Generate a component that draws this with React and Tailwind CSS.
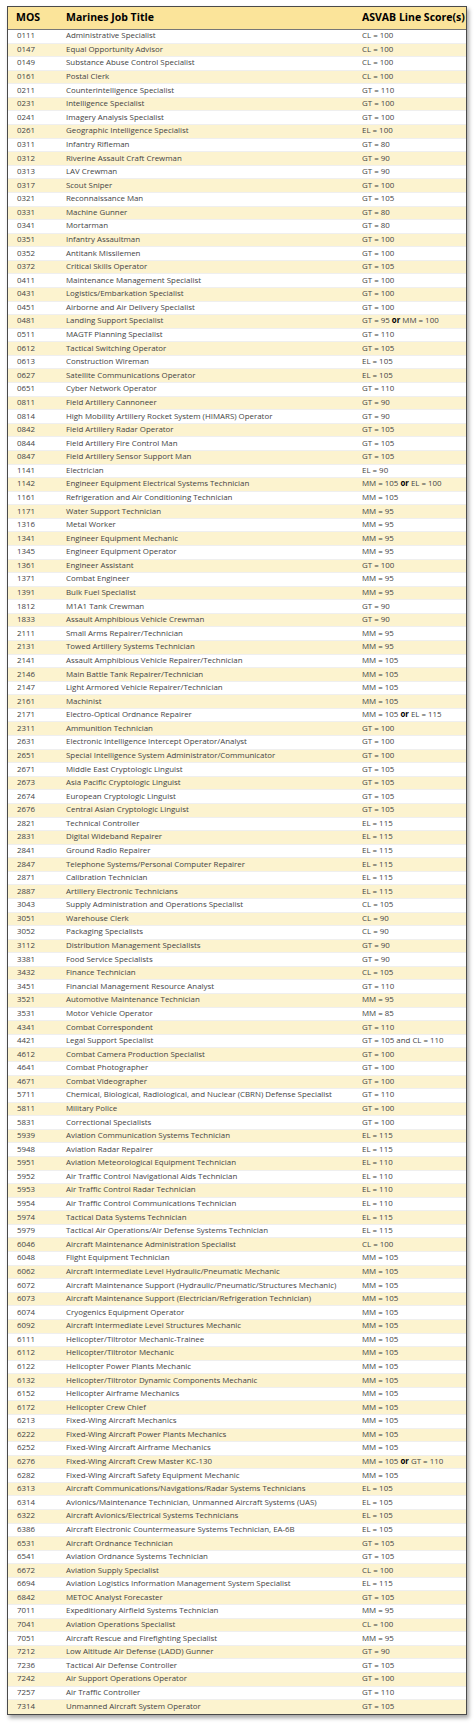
const rows = `0111|Administrative Specialist|CL = 100
0147|Equal Opportunity Advisor|CL = 100
0149|Substance Abuse Control Specialist|CL = 100
0161|Postal Clerk|CL = 100
0211|Counterintelligence Specialist|GT = 110
0231|Intelligence Specialist|GT = 100
0241|Imagery Analysis Specialist|GT = 100
0261|Geographic Intelligence Specialist|EL = 100
0311|Infantry Rifleman|GT = 80
0312|Riverine Assault Craft Crewman|GT = 90
0313|LAV Crewman|GT = 90
0317|Scout Sniper|GT = 100
0321|Reconnaissance Man|GT = 105
0331|Machine Gunner|GT = 80
0341|Mortarman|GT = 80
0351|Infantry Assaultman|GT = 100
0352|Antitank Missilemen|GT = 100
0372|Critical Skills Operator|GT = 105
0411|Maintenance Management Specialist|GT = 100
0431|Logistics/Embarkation Specialist|GT = 100
0451|Airborne and Air Delivery Specialist|GT = 100
0481|Landing Support Specialist|GT = 95 or MM = 100
0511|MAGTF Planning Specialist|GT = 110
0612|Tactical Switching Operator|GT = 105
0613|Construction Wireman|EL = 105
0627|Satellite Communications Operator|EL = 105
0651|Cyber Network Operator|GT = 110
0811|Field Artillery Cannoneer|GT = 90
0814|High Mobility Artillery Rocket System (HIMARS) Operator|GT = 90
0842|Field Artillery Radar Operator|GT = 105
0844|Field Artillery Fire Control Man|GT = 105
0847|Field Artillery Sensor Support Man|GT = 105
1141|Electrician|EL = 90
1142|Engineer Equipment Electrical Systems Technician|MM = 105 or EL = 100
1161|Refrigeration and Air Conditioning Technician|MM = 105
1171|Water Support Technician|MM = 95
1316|Metal Worker|MM = 95
1341|Engineer Equipment Mechanic|MM = 95
1345|Engineer Equipment Operator|MM = 95
1361|Engineer Assistant|GT = 100
1371|Combat Engineer|MM = 95
1391|Bulk Fuel Specialist|MM = 95
1812|M1A1 Tank Crewman|GT = 90
1833|Assault Amphibious Vehicle Crewman|GT = 90
2111|Small Arms Repairer/Technician|MM = 95
2131|Towed Artillery Systems Technician|MM = 95
2141|Assault Amphibious Vehicle Repairer/Technician|MM = 105
2146|Main Battle Tank Repairer/Technician|MM = 105
2147|Light Armored Vehicle Repairer/Technician|MM = 105
2161|Machinist|MM = 105
2171|Electro-Optical Ordnance Repairer|MM = 105 or EL = 115
2311|Ammunition Technician|GT = 100
2631|Electronic Intelligence Intercept Operator/Analyst|GT = 100
2651|Special Intelligence System Administrator/Communicator|GT = 100
2671|Middle East Cryptologic Linguist|GT = 105
2673|Asia Pacific Cryptologic Linguist|GT = 105
2674|European Cryptologic Linguist|GT = 105
2676|Central Asian Cryptologic Linguist|GT = 105
2821|Technical Controller|EL = 115
2831|Digital Wideband Repairer|EL = 115
2841|Ground Radio Repairer|EL = 115
2847|Telephone Systems/Personal Computer Repairer|EL = 115
2871|Calibration Technician|EL = 115
2887|Artillery Electronic Technicians|EL = 115
3043|Supply Administration and Operations Specialist|CL = 105
3051|Warehouse Clerk|CL = 90
3052|Packaging Specialists|CL = 90
3112|Distribution Management Specialists|GT = 90
3381|Food Service Specialists|GT = 90
3432|Finance Technician|CL = 105
3451|Financial Management Resource Analyst|GT = 110
3521|Automotive Maintenance Technician|MM = 95
3531|Motor Vehicle Operator|MM = 85
4341|Combat Correspondent|GT = 110
4421|Legal Support Specialist|GT = 105 and CL = 110
4612|Combat Camera Production Specialist|GT = 100
4641|Combat Photographer|GT = 100
4671|Combat Videographer|GT = 100
5711|Chemical, Biological, Radiological, and Nuclear (CBRN) Defense Specialist|GT = 110
5811|Military Police|GT = 100
5831|Correctional Specialists|GT = 100
5939|Aviation Communication Systems Technician|EL = 115
5948|Aviation Radar Repairer|EL = 115
5951|Aviation Meteorological Equipment Technician|EL = 110
5952|Air Traffic Control Navigational Aids Technician|EL = 110
5953|Air Traffic Control Radar Technician|EL = 110
5954|Air Traffic Control Communications Technician|EL = 110
5974|Tactical Data Systems Technician|EL = 115
5979|Tactical Air Operations/Air Defense Systems Technician|EL = 115
6046|Aircraft Maintenance Administration Specialist|CL = 100
6048|Flight Equipment Technician|MM = 105
6062|Aircraft Intermediate Level Hydraulic/Pneumatic Mechanic|MM = 105
6072|Aircraft Maintenance Support (Hydraulic/Pneumatic/Structures Mechanic)|MM = 105
6073|Aircraft Maintenance Support (Electrician/Refrigeration Technician)|MM = 105
6074|Cryogenics Equipment Operator|MM = 105
6092|Aircraft Intermediate Level Structures Mechanic|MM = 105
6111|Helicopter/Tiltrotor Mechanic-Trainee|MM = 105
6112|Helicopter/Tiltrotor Mechanic|MM = 105
6122|Helicopter Power Plants Mechanic|MM = 105
6132|Helicopter/Tiltrotor Dynamic Components Mechanic|MM = 105
6152|Helicopter Airframe Mechanics|MM = 105
6172|Helicopter Crew Chief|MM = 105
6213|Fixed-Wing Aircraft Mechanics|MM = 105
6222|Fixed-Wing Aircraft Power Plants Mechanics|MM = 105
6252|Fixed-Wing Aircraft Airframe Mechanics|MM = 105
6276|Fixed-Wing Aircraft Crew Master KC-130|MM = 105 or GT = 110
6282|Fixed-Wing Aircraft Safety Equipment Mechanic|MM = 105
6313|Aircraft Communications/Navigations/Radar Systems Technicians|EL = 105
6314|Avionics/Maintenance Technician, Unmanned Aircraft Systems (UAS)|EL = 105
6322|Aircraft Avionics/Electrical Systems Technicians|EL = 105
6386|Aircraft Electronic Countermeasure Systems Technician, EA-6B|EL = 105
6531|Aircraft Ordnance Technician|GT = 105
6541|Aviation Ordnance Systems Technician|GT = 105
6672|Aviation Supply Specialist|CL = 100
6694|Aviation Logistics Information Management System Specialist|EL = 115
6842|METOC Analyst Forecaster|GT = 105
7011|Expeditionary Airfield Systems Technician|MM = 95
7041|Aviation Operations Specialist|CL = 100
7051|Aircraft Rescue and Firefighting Specialist|MM = 95
7212|Low Altitude Air Defense (LADD) Gunner|GT = 90
7236|Tactical Air Defense Controller|GT = 105
7242|Air Support Operations Operator|GT = 100
7257|Air Traffic Controller|GT = 110
7314|Unmanned Aircraft System Operator|GT = 105`
  .split("\n")
  .map((line) => line.split("|"));

function Score({ text }) {
  const parts = text.split(" or ");
  if (parts.length === 1) return <>{text}</>;
  return (
    <>
      {parts[0]} <b className="font-bold text-black">or</b> {parts[1]}
    </>
  );
}

export default function App() {
  return (
    <div className="min-h-screen bg-white pt-[6px] pl-[7px]">
      <div
        className="w-[460px] border border-[#4a4a4a] shadow-[2px_3px_4px_rgba(0,0,0,0.35)] text-[#444] text-[7.9px]"
        style={{ fontFamily: '"Open Sans", "Noto Sans", sans-serif' }}
      >
        <div className="flex items-center h-[23px] bg-[#fbe49a] border-b border-[#777] text-black font-bold text-[10.5px]">
          <div className="w-[58px] pl-[8px]">MOS</div>
          <div className="flex-1">Marines Job Title</div>
          <div className="w-[104px]">ASVAB Line Score(s)</div>
        </div>
        {rows.map(([mos, title, score], i) => (
          <div
            key={mos}
            className={`flex items-center h-[13.59px] leading-none whitespace-nowrap border-b border-[#efefef] last:border-b-0 ${
              i % 2 === 1 ? "bg-[#fcf3cf]" : "bg-white"
            }`}
          >
            <div className="w-[58px] pl-[9px]">{mos}</div>
            <div className="flex-1">{title}</div>
            <div className="w-[104px]">
              <Score text={score} />
            </div>
          </div>
        ))}
      </div>
    </div>
  );
}
